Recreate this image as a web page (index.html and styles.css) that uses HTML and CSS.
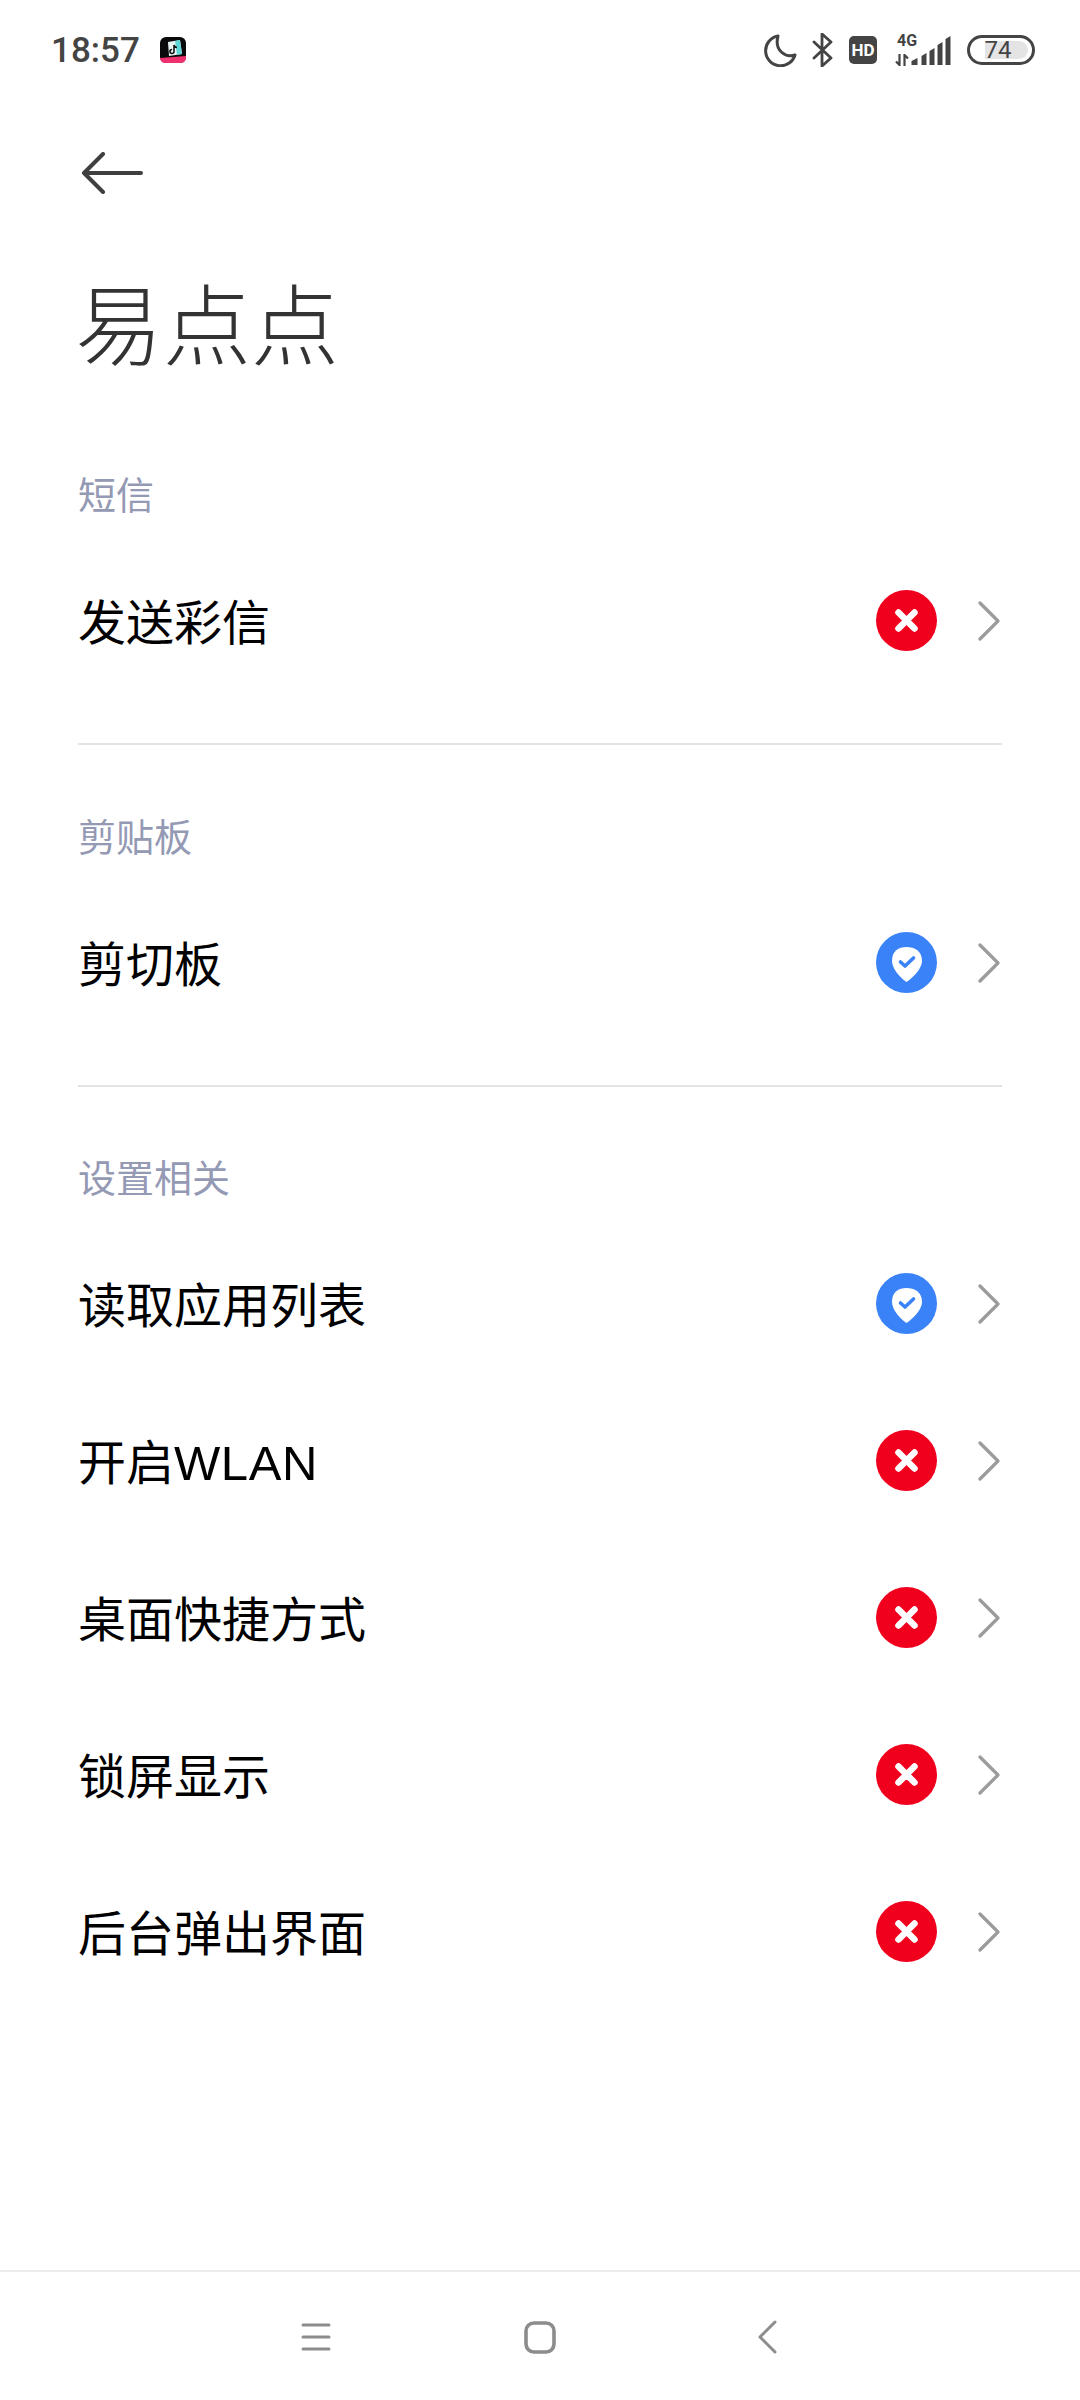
FILE: index.html

```html
<!DOCTYPE html>
<html lang="zh-CN">
<head>
    <meta charset="UTF-8">
    <title>易点点</title>
    <link rel="stylesheet" href="styles.css">
</head>
<body>
    <svg class="defs" width="0" height="0">
        <symbol id="deny" viewBox="0 0 61 61">
            <circle cx="30.5" cy="30.5" r="30.5" fill="#f1001e"/>
            <path d="M22.5 22.5L38.5 38.5M38.5 22.5L22.5 38.5" stroke="#fff" stroke-width="6.5" stroke-linecap="round"/>
        </symbol>
        <symbol id="allow" viewBox="0 0 61 61">
            <circle cx="30.5" cy="30.5" r="30.5" fill="#3a82f7"/>
            <path d="M30.5 15C38.5 15 46 19 46 29C46 36 38 45 30.5 50C23 45 16 36 16 29C16 19 22.5 15 30.5 15Z" fill="#fff"/>
            <path d="M24.5 30L29 34L37.5 26" fill="none" stroke="#3a82f7" stroke-width="3.6" stroke-linecap="round" stroke-linejoin="round"/>
        </symbol>
        <symbol id="chev" viewBox="0 0 22 40">
            <path d="M2 2L20 20L2 38" fill="none" stroke="#9b9b9b" stroke-width="3.2" stroke-linecap="round" stroke-linejoin="round"/>
        </symbol>
    </svg>

    <div class="statusbar">
        <div class="status-left">
            <span class="clock">18:57</span>
            <svg class="app-icon" width="26" height="26" viewBox="0 0 26 26">
                <rect width="26" height="26" rx="6" fill="#0a0a0c"/>
                <path d="M0 21L26 19V20C26 24 24 26 20 26H6C2 26 0 24 0 20Z" fill="#f0316f"/>
                <path d="M8 5L20 3L22 17L9 19Z" fill="#e8f4f4"/>
                <path d="M15 4L20 3L22 17L17 18Z" fill="#5fd5d5"/>
                <path d="M14 8V14.5A2 2 0 1 1 12 12.5M14 8C14.500 9.500 15.500 10.500 17 10.500" fill="none" stroke="#111" stroke-width="1.600"/>
            </svg>
        </div>
        <div class="status-right">
            <svg width="34" height="34" viewBox="0 0 34 34" class="moon">
                <path d="M14 3A15 15 0 1 0 31 22C22 25 10 18 14 3Z" fill="none" stroke="#444" stroke-width="3" stroke-linejoin="round"/>
            </svg>
            <svg width="22" height="34" viewBox="0 0 22 34" class="bt">
                <path d="M2 9L19 25L10 33V1L19 9L2 25" fill="none" stroke="#444" stroke-width="2.800" stroke-linejoin="round" stroke-linecap="round"/>
            </svg>
            <span class="hd">HD</span>
            <div class="net">
                <span class="net-label">4G</span>
                <svg width="14" height="12" viewBox="0 0 14 12">
                    <path d="M4.500 0V11L1 7.500M9.500 12V1L13 4.500" fill="none" stroke="#444" stroke-width="2.200"/>
                </svg>
            </div>
            <svg class="signal" width="40" height="29" viewBox="0 0 40 29">
                <path d="M0.500 29V25L6.500 22V29ZM10.500 29V20L15.500 17V29ZM18.500 29V15L23.500 12V29ZM26.500 29V9L31.500 6V29ZM34.500 29V3L39.500 0V29Z" fill="#444"/>
            </svg>
            <div class="battery"><span class="battery-fill"></span><span class="battery-num">74</span></div>
        </div>
    </div>

    <div class="header">
        <svg class="back" width="62" height="42" viewBox="0 0 62 42">
            <path d="M22 2L3 21L22 40M3 21H60" fill="none" stroke="#3f3f3f" stroke-width="4" stroke-linecap="round" stroke-linejoin="round"/>
        </svg>
        <h1 class="title">易点点</h1>
    </div>

    <div class="section">
        <div class="section-title">短信</div>
        <div class="row"><span class="row-name">发送彩信</span><svg class="state"><use href="#deny"/></svg><svg class="chev"><use href="#chev"/></svg></div>
    </div>
    <div class="section">
        <div class="section-title">剪贴板</div>
        <div class="row"><span class="row-name">剪切板</span><svg class="state"><use href="#allow"/></svg><svg class="chev"><use href="#chev"/></svg></div>
    </div>
    <div class="section last">
        <div class="section-title">设置相关</div>
        <div class="row"><span class="row-name">读取应用列表</span><svg class="state"><use href="#allow"/></svg><svg class="chev"><use href="#chev"/></svg></div>
        <div class="row"><span class="row-name">开启<span class="latin">WLAN</span></span><svg class="state"><use href="#deny"/></svg><svg class="chev"><use href="#chev"/></svg></div>
        <div class="row"><span class="row-name">桌面快捷方式</span><svg class="state"><use href="#deny"/></svg><svg class="chev"><use href="#chev"/></svg></div>
        <div class="row"><span class="row-name">锁屏显示</span><svg class="state"><use href="#deny"/></svg><svg class="chev"><use href="#chev"/></svg></div>
        <div class="row"><span class="row-name">后台弹出界面</span><svg class="state"><use href="#deny"/></svg><svg class="chev"><use href="#chev"/></svg></div>
    </div>

    <div class="navbar">
        <svg width="30" height="28" viewBox="0 0 30 28">
            <path d="M2 2H28M2 14H28M2 26H28" stroke="#8c8c8c" stroke-width="3" stroke-linecap="round"/>
        </svg>
        <svg width="32" height="33" viewBox="0 0 32 33">
            <rect x="2" y="2" width="28" height="29" rx="8" fill="none" stroke="#8c8c8c" stroke-width="3.600"/>
        </svg>
        <svg class="nav-back" width="20" height="34" viewBox="0 0 20 34">
            <path d="M17 2L2 17L17 32" fill="none" stroke="#8c8c8c" stroke-width="3" stroke-linecap="round" stroke-linejoin="round"/>
        </svg>
    </div>
</body>
</html>
```

FILE: styles.css

```css
html, body {
    margin: 0;
    padding: 0;
}
body {
    width: 1080px;
    height: 2400px;
    display: flex;
    flex-direction: column;
    background-color: #fff;
    font-family: "Noto Sans CJK SC", "Noto Sans", sans-serif;
    overflow: hidden;
}
.defs {
    position: absolute;
}
.statusbar {
    height: 100px;
    padding: 0 45px 0 51px;
    display: flex;
    justify-content: space-between;
    align-items: center;
    color: #444;
}
.status-left {
    display: flex;
    align-items: center;
    gap: 20px;
}
.clock {
    font-family: "Roboto", sans-serif;
    font-size: 35px;
    font-weight: 500;
}
.status-right {
    display: flex;
    align-items: center;
}
.bt {
    margin-left: 14px;
}
.hd {
    margin-left: 15px;
    width: 28px;
    height: 28px;
    border-radius: 5px;
    background-color: #444;
    color: #fff;
    font-family: "Roboto", sans-serif;
    font-size: 17px;
    font-weight: 700;
    line-height: 28px;
    text-align: center;
}
.net {
    margin-left: 18px;
    width: 25px;
    display: flex;
    flex-direction: column;
    align-items: flex-start;
    gap: 6px;
}
.net-label {
    font-family: "Roboto", sans-serif;
    font-size: 16px;
    font-weight: 700;
    line-height: 14px;
    padding-left: 2px;
}
.signal {
    margin-left: -9px;
}
.battery {
    margin-left: 16px;
    width: 62px;
    height: 24px;
    border: 3px solid #444;
    border-radius: 15px;
    position: relative;
}
.battery-fill {
    position: absolute;
    left: 15px;
    top: 3px;
    bottom: 3px;
    width: 43px;
    border-radius: 0 9px 9px 0;
    background-color: #e4e4e4;
}
.battery-num {
    position: relative;
    font-family: "Roboto", sans-serif;
    font-size: 24px;
    line-height: 24px;
    display: block;
    text-align: center;
    padding-right: 6px;
}
.header {
    padding: 0 75px;
    margin-bottom: 21px;
}
.back {
    display: block;
    margin: 52px 0 0 6px;
}
.title {
    margin: 64px 0 0;
    font-size: 88px;
    font-weight: 300;
    line-height: 124px;
    color: #333;
}
.section {
    margin: 0 78px;
    padding-top: 63px;
    padding-bottom: 44px;
    border-bottom: 2px solid #e4e4e4;
}
.section-title {
    font-size: 38px;
    line-height: 54px;
    color: #9499b4;
}
.section.last {
    padding-top: 62px;
    border-bottom: none;
}
.row {
    height: 157px;
    display: flex;
    align-items: center;
}
.section-title + .row {
    margin-top: 22px;
}
.row-name {
    flex: 1;
    font-size: 48px;
    color: #000;
    padding-bottom: 3px;
}
.latin {
    font-family: "Liberation Sans", sans-serif;
    font-size: 49px;
    letter-spacing: 0.6px;
}
.state {
    width: 61px;
    height: 61px;
}
.chev {
    width: 22px;
    height: 40px;
    margin-left: 41px;
    margin-right: 2px;
}
.navbar {
    margin-top: auto;
    height: 126px;
    padding-top: 2px;
    padding-left: 301px;
    border-top: 2px solid #ececec;
    display: flex;
    align-items: center;
    gap: 193px;
}
.nav-back {
    margin-left: 9px;
}
```
